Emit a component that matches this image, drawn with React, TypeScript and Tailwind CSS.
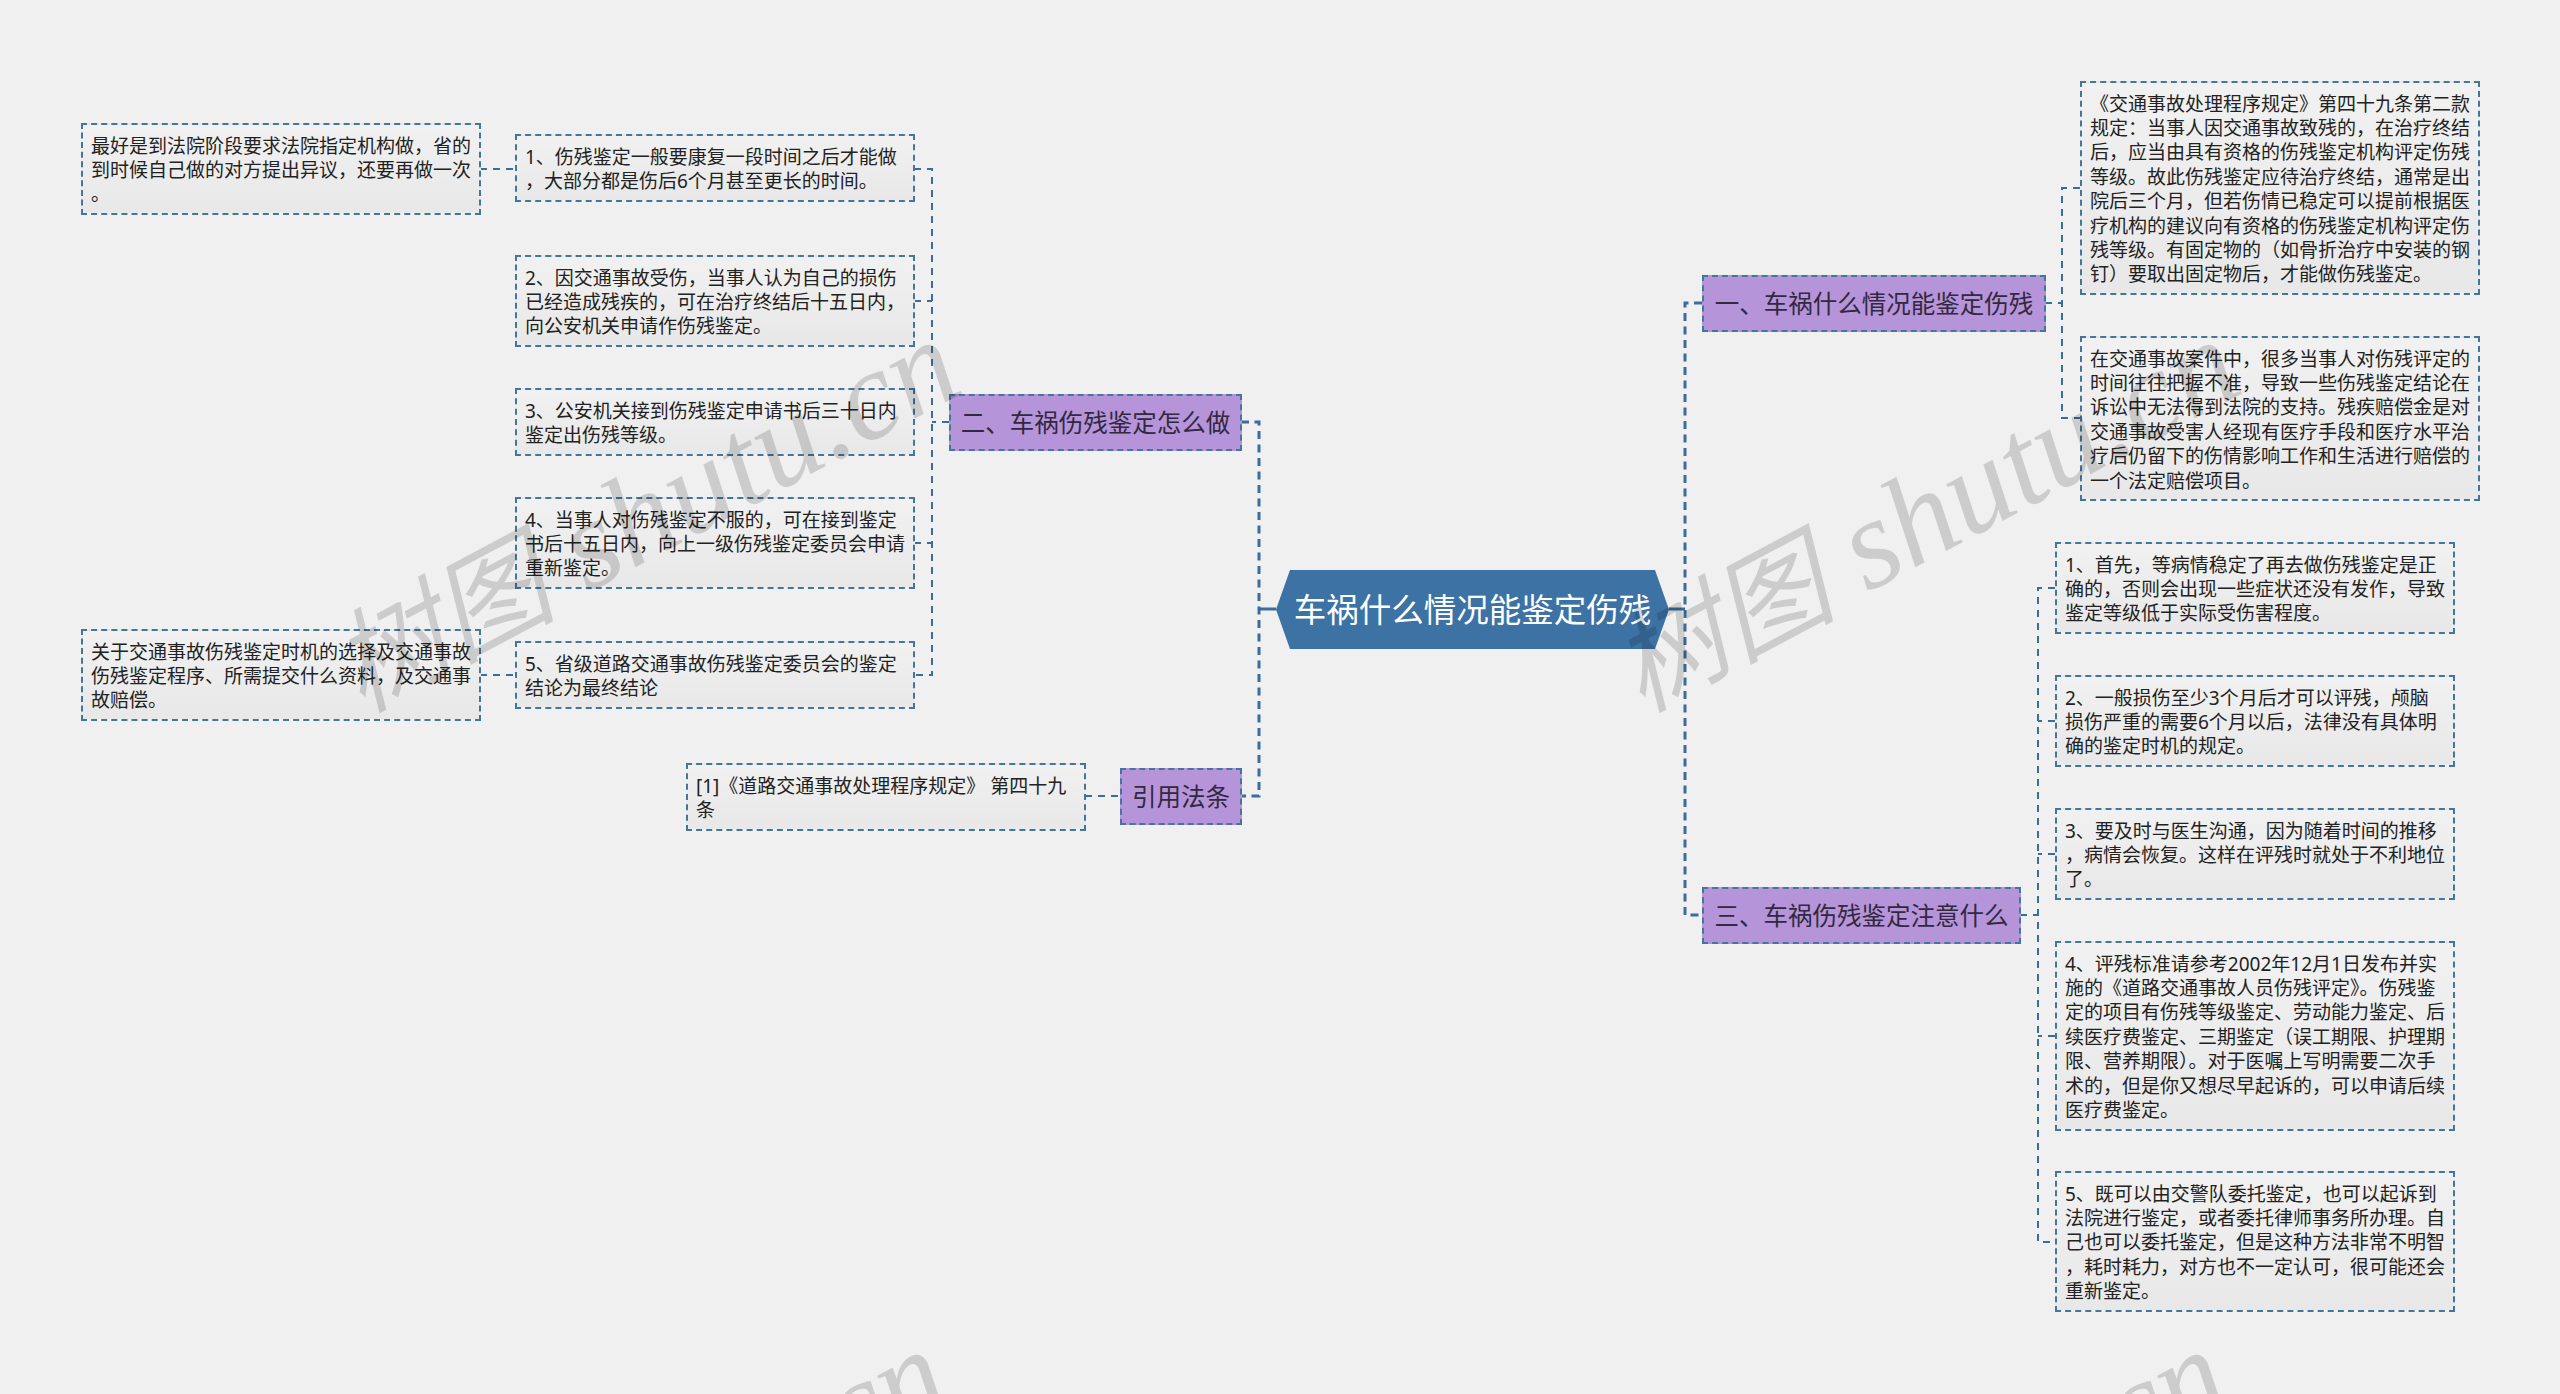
const notes = [
  { pos: 'left-[81px] top-[123px]', text: '最好是到法院阶段要求法院指定机构做，省的\n到时候自己做的对方提出异议，还要再做一次\n。' },
  { pos: 'left-[81px] top-[629px]', text: '关于交通事故伤残鉴定时机的选择及交通事故\n伤残鉴定程序、所需提交什么资料，及交通事\n故赔偿。' },
  { pos: 'left-[515px] top-[134px]', text: '1、伤残鉴定一般要康复一段时间之后才能做\n，大部分都是伤后6个月甚至更长的时间。' },
  { pos: 'left-[515px] top-[255px]', text: '2、因交通事故受伤，当事人认为自己的损伤\n已经造成残疾的，可在治疗终结后十五日内，\n向公安机关申请作伤残鉴定。' },
  { pos: 'left-[515px] top-[388px]', text: '3、公安机关接到伤残鉴定申请书后三十日内\n鉴定出伤残等级。' },
  { pos: 'left-[515px] top-[497px]', text: '4、当事人对伤残鉴定不服的，可在接到鉴定\n书后十五日内，向上一级伤残鉴定委员会申请\n重新鉴定。' },
  { pos: 'left-[515px] top-[641px]', text: '5、省级道路交通事故伤残鉴定委员会的鉴定\n结论为最终结论' },
  { pos: 'left-[686px] top-[763px]', text: '[1]《道路交通事故处理程序规定》 第四十九\n条' },
  { pos: 'left-[2080px] top-[81px]', text: '《交通事故处理程序规定》第四十九条第二款\n规定：当事人因交通事故致残的，在治疗终结\n后，应当由具有资格的伤残鉴定机构评定伤残\n等级。故此伤残鉴定应待治疗终结，通常是出\n院后三个月，但若伤情已稳定可以提前根据医\n疗机构的建议向有资格的伤残鉴定机构评定伤\n残等级。有固定物的（如骨折治疗中安装的钢\n钉）要取出固定物后，才能做伤残鉴定。' },
  { pos: 'left-[2080px] top-[336px]', text: '在交通事故案件中，很多当事人对伤残评定的\n时间往往把握不准，导致一些伤残鉴定结论在\n诉讼中无法得到法院的支持。残疾赔偿金是对\n交通事故受害人经现有医疗手段和医疗水平治\n疗后仍留下的伤情影响工作和生活进行赔偿的\n一个法定赔偿项目。' },
  { pos: 'left-[2055px] top-[542px]', text: '1、首先，等病情稳定了再去做伤残鉴定是正\n确的，否则会出现一些症状还没有发作，导致\n鉴定等级低于实际受伤害程度。' },
  { pos: 'left-[2055px] top-[675px]', text: '2、一般损伤至少3个月后才可以评残，颅脑\n损伤严重的需要6个月以后，法律没有具体明\n确的鉴定时机的规定。' },
  { pos: 'left-[2055px] top-[808px]', text: '3、要及时与医生沟通，因为随着时间的推移\n，病情会恢复。这样在评残时就处于不利地位\n了。' },
  { pos: 'left-[2055px] top-[941px]', text: '4、评残标准请参考2002年12月1日发布并实\n施的《道路交通事故人员伤残评定》。伤残鉴\n定的项目有伤残等级鉴定、劳动能力鉴定、后\n续医疗费鉴定、三期鉴定（误工期限、护理期\n限、营养期限）。对于医嘱上写明需要二次手\n术的，但是你又想尽早起诉的，可以申请后续\n医疗费鉴定。' },
  { pos: 'left-[2055px] top-[1171px]', text: '5、既可以由交警队委托鉴定，也可以起诉到\n法院进行鉴定，或者委托律师事务所办理。自\n己也可以委托鉴定，但是这种方法非常不明智\n，耗时耗力，对方也不一定认可，很可能还会\n重新鉴定。' },
]

const branches = [
  { pos: 'left-[949px] top-[394px] w-[293px]', text: '二、车祸伤残鉴定怎么做' },
  { pos: 'left-[1120px] top-[768px] w-[122px]', text: '引用法条' },
  { pos: 'left-[1702px] top-[275px] w-[344px]', text: '一、车祸什么情况能鉴定伤残' },
  { pos: 'left-[1702px] top-[887px] w-[319px]', text: '三、车祸伤残鉴定注意什么' },
]

const watermarks = [
  'left-[644px] top-[514px]',
  'left-[1924px] top-[514px]',
  'left-[632px] top-[1524px]',
  'left-[1912px] top-[1524px]',
]

const Connectors = () => (
  <svg className="absolute left-0 top-0" width="2560" height="1394" fill="none" stroke="#3a6d9c">
    <g strokeWidth="3" strokeDasharray="8 5.5">
      <path d="M1241 422H1259V796H1241" />
      <path d="M1702 303H1685V915H1702" />
    </g>
    <g strokeWidth="3">
      <path d="M1259 609H1276" />
      <path d="M1669 609H1685" />
    </g>
    <g strokeWidth="2" strokeDasharray="7 6">
      <path d="M480 169H515" />
      <path d="M480 675H515" />
      <path d="M1085 796H1120" />
      <path d="M949 422H932" />
      <path d="M914 169H932V675H914" />
      <path d="M914 301H932" />
      <path d="M914 543H932" />
      <path d="M2045 303H2062" />
      <path d="M2080 188H2062V418H2080" />
      <path d="M2020 915H2038" />
      <path d="M2055 588H2038V1242H2055" />
      <path d="M2055 721H2038" />
      <path d="M2055 854H2038" />
      <path d="M2055 1036H2038" />
    </g>
  </svg>
)

const App = () => {
  return (
    <div className="relative h-[1394px] w-[2560px] overflow-hidden bg-[#f0f0f0] font-['Noto_Sans','Noto_Sans_CJK_SC',sans-serif]">
      <Connectors />

      {notes.map(note => (
        <div
          key={note.text}
          className={`absolute ${note.pos} w-[400px] whitespace-pre border-2 border-dashed border-[#44769c] bg-linear-to-b from-[#f1f1f1] to-[#e8e8e8] px-2 pb-[6.5px] pt-[8.5px] text-[19px] leading-[24.4px] text-[#222222]`}
        >
          {note.text}
        </div>
      ))}

      {branches.map(branch => (
        <div
          key={branch.text}
          className={`absolute ${branch.pos} flex h-[57px] items-center justify-center whitespace-nowrap border-2 border-dashed border-[#44769c] bg-[#b594d9] pt-0.5 text-[24.5px] text-[#33283f]`}
        >
          {branch.text}
        </div>
      ))}

      {/* Root */}
      <div className="absolute left-[1276px] top-[570px] flex h-[79px] w-[393px] items-center justify-center whitespace-nowrap bg-[#3c72a4] pt-0.5 text-[32.5px] text-white [clip-path:polygon(14px_0,379px_0,393px_50%,379px_100%,14px_100%,0_50%)]">
        车祸什么情况能鉴定伤残
      </div>

      {/* Watermark */}
      {watermarks.map(pos => (
        <div
          key={pos}
          className={`pointer-events-none absolute ${pos} -translate-x-1/2 -translate-y-1/2 -rotate-[28deg] whitespace-nowrap font-['Liberation_Serif','Noto_Sans_CJK_SC',serif] text-[128px] italic leading-none text-black/15`}
        >
          <span className="text-[112px]">树图</span> shutu.cn
        </div>
      ))}
    </div>
  )
}

export default App
